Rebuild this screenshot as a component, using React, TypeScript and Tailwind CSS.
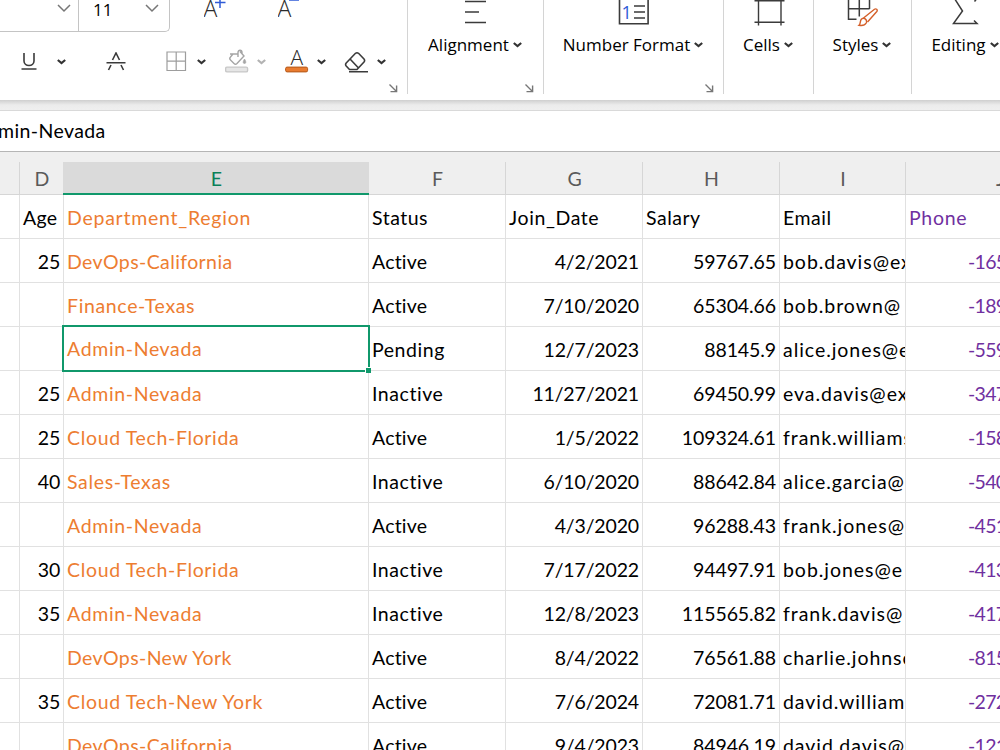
import { clsx } from 'clsx';
import type { ReactNode } from 'react';

interface Employee {
  age: string;
  region: string;
  status: string;
  joined: string;
  salary: string;
  email: string;
  phone: string;
}

const EMPLOYEES: Employee[] = [
  { age: '25', region: 'DevOps-California', status: 'Active', joined: '4/2/2021', salary: '59767.65', email: 'bob.davis@ex', phone: '-165' },
  { age: '', region: 'Finance-Texas', status: 'Active', joined: '7/10/2020', salary: '65304.66', email: 'bob.brown@', phone: '-189' },
  { age: '', region: 'Admin-Nevada', status: 'Pending', joined: '12/7/2023', salary: '88145.9', email: 'alice.jones@e', phone: '-559' },
  { age: '25', region: 'Admin-Nevada', status: 'Inactive', joined: '11/27/2021', salary: '69450.99', email: 'eva.davis@ex', phone: '-347' },
  { age: '25', region: 'Cloud Tech-Florida', status: 'Active', joined: '1/5/2022', salary: '109324.61', email: 'frank.williams', phone: '-158' },
  { age: '40', region: 'Sales-Texas', status: 'Inactive', joined: '6/10/2020', salary: '88642.84', email: 'alice.garcia@', phone: '-540' },
  { age: '', region: 'Admin-Nevada', status: 'Active', joined: '4/3/2020', salary: '96288.43', email: 'frank.jones@', phone: '-451' },
  { age: '30', region: 'Cloud Tech-Florida', status: 'Inactive', joined: '7/17/2022', salary: '94497.91', email: 'bob.jones@e', phone: '-413' },
  { age: '35', region: 'Admin-Nevada', status: 'Inactive', joined: '12/8/2023', salary: '115565.82', email: 'frank.davis@', phone: '-417' },
  { age: '', region: 'DevOps-New York', status: 'Active', joined: '8/4/2022', salary: '76561.88', email: 'charlie.johnso', phone: '-815' },
  { age: '35', region: 'Cloud Tech-New York', status: 'Active', joined: '7/6/2024', salary: '72081.71', email: 'david.william', phone: '-272' },
  { age: '', region: 'DevOps-California', status: 'Active', joined: '9/4/2023', salary: '84946.19', email: 'david.davis@', phone: '-121' },
];

const SELECTED_ROW = 2;
const GRID = 'grid w-[1094px] grid-cols-[20px_44px_305px_137px_137px_137px_126px_188px]';

export default function App() {
  return (
    <div className="h-[750px] w-[1000px] overflow-hidden bg-white text-black">
      <Ribbon />
      <div className="h-[10px] bg-gradient-to-b from-[#cfcfcf] via-[#ececec] via-50% to-[#efefef]" />
      <div className="flex h-[42px] items-center border-t border-b border-t-[#d9d9d9] border-b-[#b5b5b5] bg-white font-[Lato,sans-serif] text-[19.5px] tracking-[0.4px]">
        <span className="-ml-[2px]">min-Nevada</span>
      </div>
      <ColumnHeaders />
      <Sheet />
    </div>
  );
}

function Ribbon() {
  return (
    <div className="flex h-[100px] bg-white font-['Open_Sans',sans-serif]">
      <div className="flex w-[407px] shrink-0 flex-col">
        <FontSizeRow />
        <FontStyleRow />
      </div>
      <Group label="Alignment" width="w-[136px]" launcher>
        <svg width="22" height="26" className="ml-px stroke-[#3b3b3b]" strokeWidth="1.6">
          <path d="M0 1.5h21M0 12h14M0 22.5h21" />
        </svg>
      </Group>
      <Group label="Number Format" width="w-[180px]" launcher>
        <svg width="32" height="26" fill="none" className="stroke-[#3b3b3b]" strokeWidth="1.6">
          <path d="M1.5 0v23.8h28.6V0M16 6h11M16 12h11M16 18h11" />
          <text x="3.5" y="18.5" fontSize="18" stroke="none" className="fill-[#2f5bd7]">1</text>
        </svg>
      </Group>
      <Group label="Cells" width="w-[90px]">
        <svg width="31" height="26" className="ml-px stroke-[#3b3b3b]" strokeWidth="1.4">
          <path d="M4.5 0v25.5M27 0v25.5M.5.7h30M.5 22.3h30" />
        </svg>
      </Group>
      <Group label="Styles" width="w-[98px]">
        <svg width="31" height="27" fill="none" className="stroke-[#3b3b3b]" strokeWidth="1.5">
          <path d="M1.5 0v19.2h8M1.5 8.7h21M12.3 0v16.5M22.5 0v9" />
          <g className="stroke-[#d4602a]" strokeWidth="1.4">
            <path d="M16.5 18 27.5 9.3c1.5-1.2 3.5.6 2.3 2.2L20.5 22" />
            <path d="M12 25.3c2-1.5.5-4 2.5-6.3 3-2 6 1 4.7 4-1.5 2.7-5 2.7-7.2 2.3z" />
          </g>
        </svg>
      </Group>
      <Group label="Editing" width="w-[108px]">
        <svg width="28" height="26" fill="none" className="stroke-[#3b3b3b]" strokeWidth="1.5">
          <path d="M2.5-1.5 10.5 11 1.500 23.500h23.500l-3-3M22.500 1.500l2-2.500" />
        </svg>
      </Group>
    </div>
  );
}

function Group({
  label,
  width,
  launcher,
  children,
}: {
  label: string;
  width: string;
  launcher?: boolean;
  children: ReactNode;
}) {
  return (
    <div className={clsx('flex h-[94px] shrink-0 flex-col border-l border-[#d4d4d4]', width)}>
      <div className="flex h-[30px] justify-center">{children}</div>
      <div className="flex h-[30px] items-center justify-center gap-1 pr-px text-[17px] whitespace-nowrap">
        {label}
        <Caret />
      </div>
      {launcher && <Launcher className="mb-px" />}
    </div>
  );
}

function FontSizeRow() {
  return (
    <div className="flex h-8">
      <div className="flex h-8 w-[79px] shrink-0 justify-end border-r border-b border-[#c4c4c4] pr-[7px]">
        <Chevron />
      </div>
      <div className="flex h-8 w-[91px] shrink-0 justify-between rounded-br-[5px] border-r border-b border-[#c4c4c4] pr-[10px] pl-[14px]">
        <span className="-mt-[2px] text-[17px] leading-6">11</span>
        <Chevron />
      </div>
      <svg width="24" height="20" className="ml-[34px]">
        <text x="-.5" y="16.5" fontSize="23" className="fill-[#2b2b2b] font-light">A</text>
        <path d="M11 2.5h10.5M16 -2v10" strokeWidth="1.5" className="stroke-[#2f5bd7]" />
      </svg>
      <svg width="24" height="20" className="ml-[50px]">
        <text x="-.5" y="16.5" fontSize="23" className="fill-[#2b2b2b] font-light">A</text>
        <path d="M11 0h10" strokeWidth="1.5" className="stroke-[#2f5bd7]" />
      </svg>
    </div>
  );
}

function FontStyleRow() {
  return (
    <>
      <div className="flex h-11 items-end pt-3">
        <svg width="16" height="24" fill="none" strokeWidth="1.6" className="ml-[21px] stroke-[#3b3b3b]">
          <path d="M3 1v8c0 6 10 6 10 0V1M.5 17h15" />
        </svg>
        <Caret className="mb-[11px] ml-[20px]" />
        <svg width="20" height="24" fill="none" strokeWidth="1.6" className="ml-[40px] stroke-[#3b3b3b]">
          <path d="M6.5 8 10 1l3.5 7M.5 10.7h19M5 13l-2.5 5M15 13l2.5 5" />
        </svg>
        <svg width="21" height="25" fill="none" strokeWidth="1.2" className="ml-[40px] stroke-[#9d9d9d]">
          <path d="M1 1h18.5v18.5H1zM10.2 1v18.5M1 10.2h18.5" />
        </svg>
        <Caret className="mb-[11px] ml-[10px]" />
        <svg width="24" height="27" fill="none" strokeWidth="1.4" className="ml-[19px] stroke-[#a5a5a5]">
          <rect x=".6" y="18.1" width="22" height="4.8" rx="1.5" className="fill-[#e6e6e6] stroke-[#c8c8c8]" />
          <path d="M5 5h8.5M13 8V3.5c0-3 4-3 4 0V5M15 2.5l4 4.5-7 7.5c-1 1-2 1-3 0L5.5 11c-1-1-1-2 0-3l2.500-3" />
          <path d="M19.5 10c-2 3-1.500 4.500 0 4.500s2-1.500 0-4.500z" className="fill-[#a5a5a5]" strokeWidth=".6" />
        </svg>
        <Caret muted className="mb-[11px] ml-[8px]" />
        <svg width="24" height="27" className="ml-[19px]">
          <text x="5.5" y="15.5" fontSize="21" className="fill-[#2b2b2b] font-light">A</text>
          <rect x=".6" y="18.1" width="22" height="4.8" rx="1.5" className="fill-[#e97c30] stroke-[#b4591b]" />
        </svg>
        <Caret className="mb-[11px] ml-[8px]" />
        <svg width="26" height="25" fill="none" strokeWidth="1.6" className="ml-[18px] stroke-[#3b3b3b]">
          <path d="M2.2 12 11.5 2.3q1.5-1.2 3 0l5.5 5.700q1.200 1.500 0 3l-7 7.500H5.500L2.200 15q-1.200-1.500 0-3zM6.500 8.500l8 8.500M5 20.800h19" />
        </svg>
        <Caret className="mb-[11px] ml-[7px]" />
      </div>
      <Launcher className="mb-[7px]" />
    </>
  );
}

function Caret({ muted, className }: { muted?: boolean; className?: string }) {
  return (
    <svg width="9" height="6" fill="none" strokeWidth="2.2" className={clsx('shrink-0', muted ? 'stroke-[#b3b3b3]' : 'stroke-[#333]', className)}>
      <path d="m.8 1 3.7 3L8.2 1" />
    </svg>
  );
}

function Chevron() {
  return (
    <svg width="14" height="9" fill="none" strokeWidth="1.5" className="mt-[4px] stroke-[#767676]">
      <path d="m1 1 6 6 6-6" />
    </svg>
  );
}

function Launcher({ className }: { className: string }) {
  return (
    <svg width="9" height="9" fill="none" strokeWidth="1.4" className={clsx('mt-auto mr-[9px] ml-auto shrink-0 stroke-[#777]', className)}>
      <path d="m.5.5 7 7M7.600 1.500v6.100H1.500" />
    </svg>
  );
}

function ColumnHeaders() {
  return (
    <div className="bg-[#efefef] pt-[10px]">
      <div className={clsx(GRID, 'h-[33px] text-center font-[Lato,sans-serif] text-[19.5px] leading-[34px] text-[#5a5a5a]')}>
        {['', 'D', 'E', 'F', 'G', 'H', 'I', 'J'].map((name) => (
          <div
            key={name}
            className={clsx(
              'h-[33px]',
              name === 'E'
                ? '-ml-px border-b-2 border-[#10986b] bg-[#dadada] pl-px text-[#0b8059]'
                : 'border-r border-b border-[#d6d6d6] pl-px',
            )}
          >
            {name}
          </div>
        ))}
      </div>
    </div>
  );
}

function Sheet() {
  return (
    <div className="font-[Lato,sans-serif] text-[19.5px] tracking-[0.4px]">
      <div className={GRID}>
        <Cell />
        <Cell className="tracking-[0.3px]">Age</Cell>
        <Cell className="tracking-[0.75px] text-[#ed7d31]">Department_Region</Cell>
        <Cell className="tracking-[0.5px]">Status</Cell>
        <Cell className="tracking-[0.6px]">Join_Date</Cell>
        <Cell className="tracking-[0.5px]">Salary</Cell>
        <Cell className="tracking-[0.5px]">Email</Cell>
        <Cell className="tracking-[0.7px] text-[#7030a0]">Phone</Cell>
      </div>
      {EMPLOYEES.map((row, i) => (
        <div key={i} className={GRID}>
          <Cell />
          <Cell className="text-right tracking-[-0.2px]">{row.age}</Cell>
          <Cell
            className={clsx('text-[#ed7d31]', row.region.startsWith('DevOps') ? 'tracking-[0.4px]' : 'tracking-[0.65px]')}
            selected={i === SELECTED_ROW}
          >
            {row.region}
          </Cell>
          <Cell className={row.status === 'Active' ? 'tracking-[0.2px]' : 'tracking-[0.55px]'}>{row.status}</Cell>
          <Cell className="text-right tracking-[-0.15px]">{row.joined}</Cell>
          <Cell className="text-right tracking-[-0.1px]">{row.salary}</Cell>
          <Cell className="tracking-[0.95px]">{row.email}</Cell>
          <Cell className="pl-[62px] tracking-[-0.7px] text-[#7030a0]">{row.phone}</Cell>
        </div>
      ))}
    </div>
  );
}

function Cell({
  children,
  className,
  selected,
}: {
  children?: ReactNode;
  className?: string;
  selected?: boolean;
}) {
  return (
    <div className="relative h-11 border-r border-b border-[#e1e1e1] whitespace-nowrap">
      <div className={clsx('h-[43px] overflow-hidden px-[3px]', selected ? 'leading-[44px]' : 'leading-[46px]', className)}>
        {children}
      </div>
      {selected && (
        <div className="absolute -top-[2px] -right-[2px] -bottom-[2px] -left-[2px] z-10 border-2 border-[#10986b]">
          <span className="absolute -right-[3px] -bottom-[3px] size-[6px] border-t border-l border-white bg-[#10986b]" />
        </div>
      )}
    </div>
  );
}
